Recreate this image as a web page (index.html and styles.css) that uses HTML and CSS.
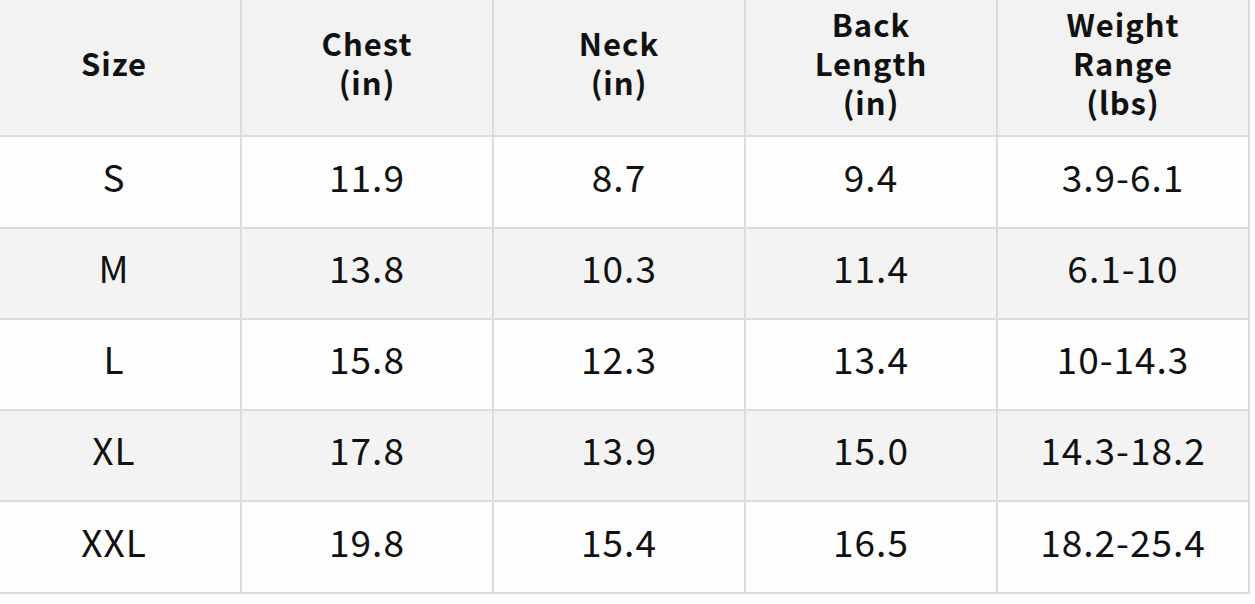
FILE: index.html
```html
<!DOCTYPE html>
<html lang="en">
<head>
<meta charset="utf-8">
<title>Size Chart</title>
<link rel="stylesheet" href="styles.css">
</head>
<body>
<table class="chart">
  <colgroup>
    <col class="c-size">
    <col class="c-val">
    <col class="c-val">
    <col class="c-val">
    <col class="c-val">
  </colgroup>
  <thead>
    <tr class="head">
      <th class="first">Size</th>
      <th>Chest<br>(in)</th>
      <th>Neck<br>(in)</th>
      <th>Back<br>Length<br>(in)</th>
      <th>Weight<br>Range<br>(lbs)</th>
    </tr>
  </thead>
  <tbody>
    <tr class="r1"><td class="first">S</td><td>11.9</td><td>8.7</td><td>9.4</td><td>3.9-6.1</td></tr>
    <tr class="r2"><td class="first">M</td><td>13.8</td><td>10.3</td><td>11.4</td><td>6.1-10</td></tr>
    <tr class="r3"><td class="first">L</td><td>15.8</td><td>12.3</td><td>13.4</td><td>10-14.3</td></tr>
    <tr class="r4"><td class="first">XL</td><td>17.8</td><td>13.9</td><td>15.0</td><td>14.3-18.2</td></tr>
    <tr class="r5"><td class="first">XXL</td><td>19.8</td><td>15.4</td><td>16.5</td><td>18.2-25.4</td></tr>
  </tbody>
</table>
</body>
</html>
```
FILE: styles.css
```css
html, body {
  margin: 0;
  padding: 0;
  background: #fdfdfd;
  overflow: hidden;
}

.chart {
  margin: -2px 0 0 -2px;
  border-collapse: separate;
  border-spacing: 2px;
  background: #dcdcdc;
  table-layout: fixed;
  width: 1252px;
  font-family: "Noto Sans CJK SC", "Noto Sans", sans-serif;
  color: #111111;
}

.c-size { width: 240px; }
.c-val { width: 250px; }

.chart th,
.chart td {
  padding: 0;
  text-align: center;
  vertical-align: middle;
}

.chart th {
  height: 124px;
  padding-bottom: 11px;
  background: #f2f2f2;
  font-weight: 700;
  font-size: 31px;
  letter-spacing: 1px;
  line-height: 39px;
}

.chart td {
  height: 76px;
  padding-bottom: 13px;
  font-size: 37px;
  letter-spacing: 1px;
  font-weight: 400;
  line-height: 40px;
  background: #fdfdfd;
}

.chart .first {
  padding-right: 12px;
}

.chart .r1 td,
.chart .r5 td { height: 77px; }

.chart .r2 td,
.chart .r4 td { background: #f3f3f3; }
```
